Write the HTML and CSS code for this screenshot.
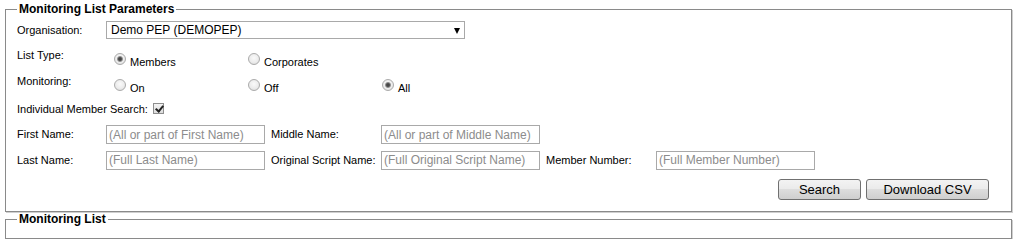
FILE: index.html
```html
<!DOCTYPE html>
<html lang="en">
	<head>
		<meta charset="UTF-8" />
		<meta name="viewport" content="width=device-width, initial-scale=1.0" />
		<title>Monitoring List</title>
		<link rel="stylesheet" href="styles.css">
	</head>
	<body>
		<form class="params">
			<fieldset class="panel">
				<legend>Monitoring List Parameters</legend>

				<div class="row row-org">
					<label class="lbl" for="org">Organisation:</label>
					<span class="select-wrap">
						<select id="org" name="org">
							<option>Demo PEP (DEMOPEP)</option>
						</select>
					</span>
				</div>

				<div class="row row-radio row-type">
					<span class="lbl">List Type:</span>
					<label class="opt"><input type="radio" name="listtype" checked /><span>Members</span></label>
					<label class="opt"><input type="radio" name="listtype" /><span>Corporates</span></label>
				</div>

				<div class="row row-radio row-mon">
					<span class="lbl">Monitoring:</span>
					<label class="opt"><input type="radio" name="monitoring" /><span>On</span></label>
					<label class="opt"><input type="radio" name="monitoring" /><span>Off</span></label>
					<label class="opt"><input type="radio" name="monitoring" checked /><span>All</span></label>
				</div>

				<div class="row row-ims">
					<label for="ims">Individual Member Search:</label>
					<input type="checkbox" class="check" id="ims" checked />
				</div>

				<div class="row row-field">
					<label class="lbl" for="first">First Name:</label>
					<input type="text" class="txt" id="first" placeholder="(All or part of First Name)" />
					<label class="lbl lbl-wide" for="middle">Middle Name:</label>
					<input type="text" class="txt" id="middle" placeholder="(All or part of Middle Name)" />
				</div>

				<div class="row row-field row-last">
					<label class="lbl" for="last">Last Name:</label>
					<input type="text" class="txt" id="last" placeholder="(Full Last Name)" />
					<label class="lbl lbl-wide" for="orig">Original Script Name:</label>
					<input type="text" class="txt" id="orig" placeholder="(Full Original Script Name)" />
					<label class="lbl lbl-wide" for="memno">Member Number:</label>
					<input type="text" class="txt" id="memno" placeholder="(Full Member Number)" />
				</div>

				<div class="row row-buttons">
					<button type="submit" class="btn btn-search">Search</button>
					<button type="button" class="btn btn-csv">Download CSV</button>
				</div>
			</fieldset>
		</form>

		<fieldset class="panel panel-list">
			<legend>Monitoring List</legend>
		</fieldset>
	</body>
</html>
```

FILE: styles.css
```css
body {
	margin: 0;
	font-family: "Liberation Sans", Arial, sans-serif;
	font-size: 11px;
	color: #000;
	background: #fff;
}

/* fieldset boxes */
.panel {
	margin: 2px 2px 0 5px;
	padding: 0 22px 5px 11px;
	border: 1px solid #8a8a8a;
	box-shadow: 1px 1px 0 #cfcfcf;
	min-width: 0;
}

.panel legend {
	padding: 0 2px;
	font-size: 12px;
	line-height: 14px;
	font-weight: bold;
	color: #000;
}

.panel-list {
	margin-top: 0;
	padding-bottom: 12px;
}

/* rows */
.row {
	display: flex;
	align-items: center;
}

.row-org {
	margin-top: 1px;
	height: 27px;
}

.row-type {
	height: 26px;
}

.row-mon {
	height: 26px;
}

.row-ims {
	height: 26px;
}

.row-field {
	height: 25px;
}

.row-last {
	height: 26px;
}

.row-buttons {
	height: 33px;
	align-items: flex-start;
	justify-content: flex-end;
	padding-top: 6px;
	box-sizing: border-box;
}

.lbl {
	width: 89px;
	flex: none;
	line-height: 13px;
}

.lbl-wide {
	width: 110px;
	margin-left: 6px;
}

/* select */
.select-wrap {
	position: relative;
	display: block;
	width: 359px;
	height: 18px;
	margin-top: -1px;
}

.select-wrap select {
	appearance: none;
	-webkit-appearance: none;
	width: 100%;
	height: 100%;
	margin: 0;
	padding: 0 0 0 4px;
	border: 1px solid #a9a9a9;
	border-radius: 0;
	background: #fff;
	font: 12px "Liberation Sans", Arial, sans-serif;
	color: #000;
	box-sizing: border-box;
}

.select-wrap::after {
	content: "";
	position: absolute;
	right: 5px;
	top: 7px;
	border-left: 3.5px solid transparent;
	border-right: 3.5px solid transparent;
	border-top: 6px solid #000;
	pointer-events: none;
}

/* radios */
.row-radio {
	align-items: flex-start;
}

.row-radio .lbl {
	padding-top: 5px;
}

.opt {
	display: flex;
	align-items: flex-start;
	width: 134px;
	padding-top: 9px;
	flex: none;
}

.opt span {
	margin-top: 3px;
	line-height: 13px;
}

.opt input {
	appearance: none;
	-webkit-appearance: none;
	width: 12px;
	height: 12px;
	margin: 0 4px 0 8px;
	border: 1px solid #ababab;
	border-radius: 50%;
	background: radial-gradient(circle at 50% 40%, #fafafa 0, #ececec 55%, #d6d6d6 100%);
	box-sizing: border-box;
}

.opt input:checked {
	background:
		radial-gradient(circle, #3a3a3a 0, #555 1.6px, #9a9a9a 2.6px, transparent 3.4px),
		radial-gradient(circle at 50% 40%, #fafafa 0, #ececec 55%, #d6d6d6 100%);
}

/* checkbox */
.check {
	appearance: none;
	-webkit-appearance: none;
	position: relative;
	width: 11px;
	height: 11px;
	margin: -1px 0 0 5px;
	border: 1px solid #8e8e8e;
	background: linear-gradient(#f4f4f4, #dcdcdc);
	box-sizing: border-box;
}

.check:checked::after {
	content: "";
	position: absolute;
	left: 3px;
	top: 0;
	width: 3px;
	height: 6px;
	border-right: 2px solid #222;
	border-bottom: 2px solid #222;
	transform: rotate(40deg);
}

/* text inputs */
.txt {
	width: 159px;
	height: 19px;
	margin: 0;
	padding: 0 2px;
	border: 1px solid #a9a9a9;
	font: 12px "Liberation Sans", Arial, sans-serif;
	box-sizing: border-box;
	flex: none;
}

.txt::placeholder {
	color: #8c8c8c;
}

/* buttons */
.btn {
	height: 21px;
	margin: 0;
	padding: 0;
	border: 1px solid #707070;
	border-radius: 3px;
	background: linear-gradient(#f3f3f3 0, #ebebeb 45%, #dddddd 50%, #cfcfcf 100%);
	font: 13px "Liberation Sans", Arial, sans-serif;
	color: #000;
}

.btn-search {
	width: 83px;
}

.btn-csv {
	width: 123px;
	margin-left: 5px;
}
```
